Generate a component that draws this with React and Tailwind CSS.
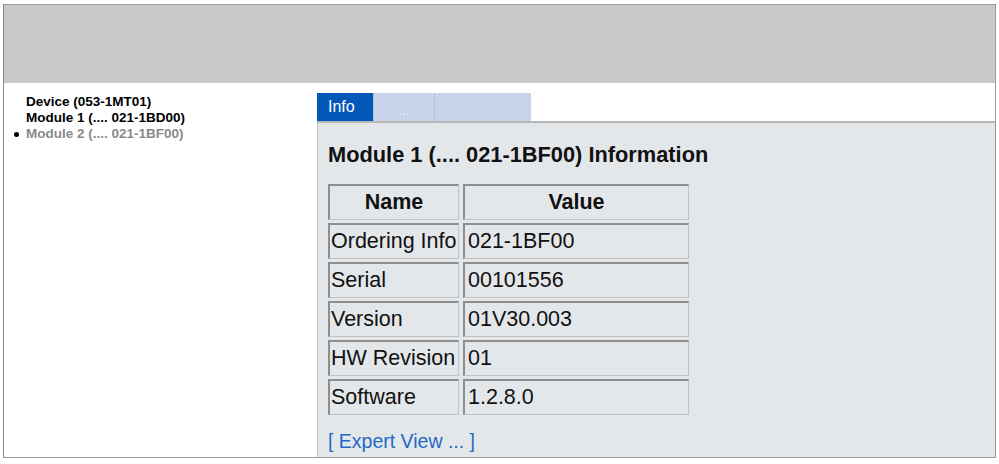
import React from "react";

const rows = [
  ["Ordering Info", "021-1BF00"],
  ["Serial", "00101556"],
  ["Version", "01V30.003"],
  ["HW Revision", "01"],
  ["Software", "1.2.8.0"],
];

const cell =
  "h-[36px] flex items-center border-t-2 border-l-2 border-r border-b border-t-[#8e8e8e] border-l-[#8e8e8e] border-r-[#c2c2c2] border-b-[#c2c2c2] bg-[#e4e7ea] text-[21.5px] text-[#111] leading-none";

export default function App() {
  return (
    <div className="w-[999px] h-[464px] bg-white font-['Liberation_Sans',Arial,sans-serif] pt-[4px] pl-[3px]">
      <div className="w-[993px] h-[454px] border border-[#9a9a9a] border-l-[#8a8a8a] flex flex-col bg-white">
        <div className="h-[78px] bg-[#c8c8c8] shrink-0" />
        <div className="flex flex-1 min-h-0">
          <div className="w-[313px] shrink-0 pt-[11px] pl-[10px]">
            <div className="text-[13.5px] leading-[16px] font-bold">
              <div className="pl-[12px] text-black">Device (053-1MT01)</div>
              <div className="pl-[12px] text-black">Module 1 (.... 021-1BD00)</div>
              <div className="flex items-center text-[#8a8a8a]">
                <span className="w-[5px] h-[5px] rounded-full bg-black mr-[7px]" />
                <span>Module 2 (.... 021-1BF00)</span>
              </div>
            </div>
          </div>
          <div className="flex-1 flex flex-col pt-[10px] min-w-0">
            <div className="flex h-[28px] shrink-0">
              <div className="w-[56px] bg-[#0357b9] text-white text-[16px] leading-none pl-[11px] pt-[6px]">
                Info
              </div>
              <div className="w-[61px] bg-[#c9d3ea] border-l border-[#b3bfd6] text-[#f4f6fb] text-[13px] leading-none flex justify-center items-end pb-[4px]">
                ...
              </div>
              <div className="w-[97px] bg-[#c9d3ea] border-l border-[#b3bfd6]" />
            </div>
            <div className="flex-1 bg-[#e4e7ea] border-t-2 border-l border-t-[#b6b6b6] border-l-[#c4c4c4] pl-[10px] pt-[19px]">
              <div className="text-[21.8px] leading-[26px] font-bold text-[#111]">
                Module 1 (.... 021-1BF00) Information
              </div>
              <div className="grid grid-cols-[131px_226px] gap-x-[4px] gap-y-[3px] mt-[16px]">
                <div className={cell + " justify-center font-bold"}>Name</div>
                <div className={cell + " justify-center font-bold"}>Value</div>
                {rows.map(([n, v]) => (
                  <React.Fragment key={n}>
                    <div className={cell + " pl-[1px] whitespace-nowrap"}>{n}</div>
                    <div className={cell + " pl-[3px]"}>{v}</div>
                  </React.Fragment>
                ))}
              </div>
              <div className="mt-[14px] text-[19.5px] leading-[24px] text-[#1f69c9]">
                [ Expert View ... ]
              </div>
            </div>
          </div>
        </div>
      </div>
    </div>
  );
}
